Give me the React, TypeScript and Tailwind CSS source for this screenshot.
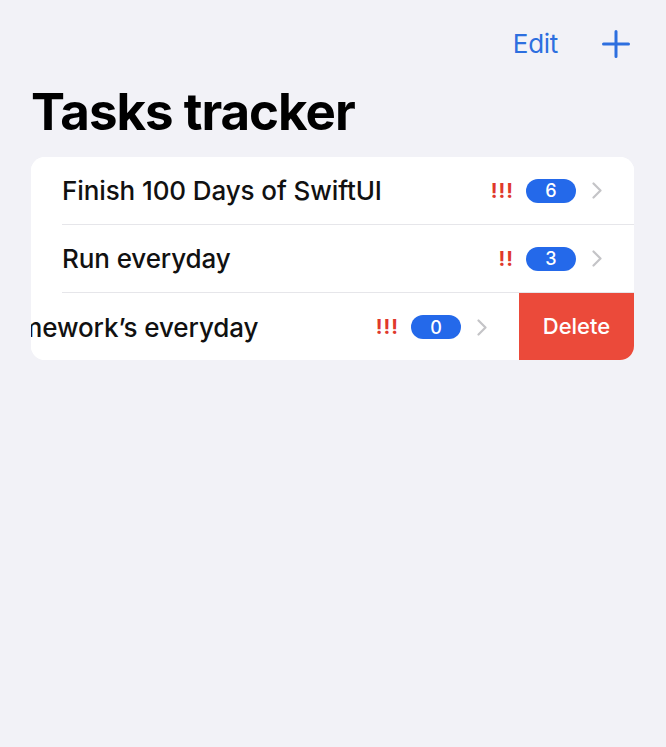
import React from "react";

type Task = {
  id: number;
  title: string;
  priority: string;
  count: number;
};

const tasks: Task[] = [
  { id: 1, title: "Finish 100 Days of SwiftUI", priority: "!!!", count: 6 },
  { id: 2, title: "Run everyday", priority: "!!", count: 3 },
  { id: 3, title: "Do homework’s everyday", priority: "!!!", count: 0 },
];

const Chevron = () => (
  <svg width="12" height="17" viewBox="0 0 12 17" fill="none">
    <path d="M2.5 1.5L9.5 8.5L2.5 15.5" stroke="#c4c4c7" strokeWidth="2.2" strokeLinecap="round" strokeLinejoin="round" />
  </svg>
);

// 一列任務內容
const TaskRow = ({ task, last }: { task: Task; last: boolean }) => (
  <div className="w-[603px] shrink-0 h-[68px] pl-[31px] bg-white">
    <div className={`h-full flex items-center pr-[31px] ${last ? "" : "border-b border-[#e6e6ea]"}`}>
      <span className="flex-1 text-[26px] font-medium text-[#111] tracking-[-0.1px] whitespace-nowrap">{task.title}</span>
      <span className="text-[20px] font-bold text-[#e0382b] tracking-[1px]">{task.priority}</span>
      <span className="ml-[12px] w-[50px] h-[24px] rounded-full bg-[#2469ea] text-white text-[18px] font-medium flex items-center justify-center">
        {task.count}
      </span>
      <span className="ml-[15px] flex items-center">
        <Chevron />
      </span>
    </div>
  </div>
);

export default function App() {
  return (
    <div className="min-h-screen w-full bg-[#f2f2f7] font-['Inter',sans-serif]">
      {/* 工具列 */}
      <div className="flex justify-end items-center gap-[44px] pr-[36px] pt-[27px] h-[60px]">
        <span className="text-[26px] text-[#2d6fdf] tracking-[-0.3px]">Edit</span>
        <svg width="28" height="28" viewBox="0 0 28 28">
          <path d="M14 1.5V26.5M1.5 14H26.5" stroke="#2d6fdf" strokeWidth="3" strokeLinecap="round" />
        </svg>
      </div>

      <h1 className="pl-[31px] mt-[20px] text-[51px] font-bold text-black tracking-[-1px] leading-[64px]">
        Tasks tracker
      </h1>

      <div className="mx-[31px] mt-[13px] w-[603px] rounded-[14px] bg-white overflow-hidden">
        {tasks.map((task, i) =>
          i === tasks.length - 1 ? (
            <div key={task.id} className="flex h-[67px]">
              <div className="ml-[-115px] flex">
                <TaskRow task={task} last />
              </div>
              <div className="w-[115px] shrink-0 bg-[#eb4a3a] flex items-center justify-center text-white text-[22px] font-medium">
                Delete
              </div>
            </div>
          ) : (
            <TaskRow key={task.id} task={task} last={false} />
          )
        )}
      </div>
    </div>
  );
}
